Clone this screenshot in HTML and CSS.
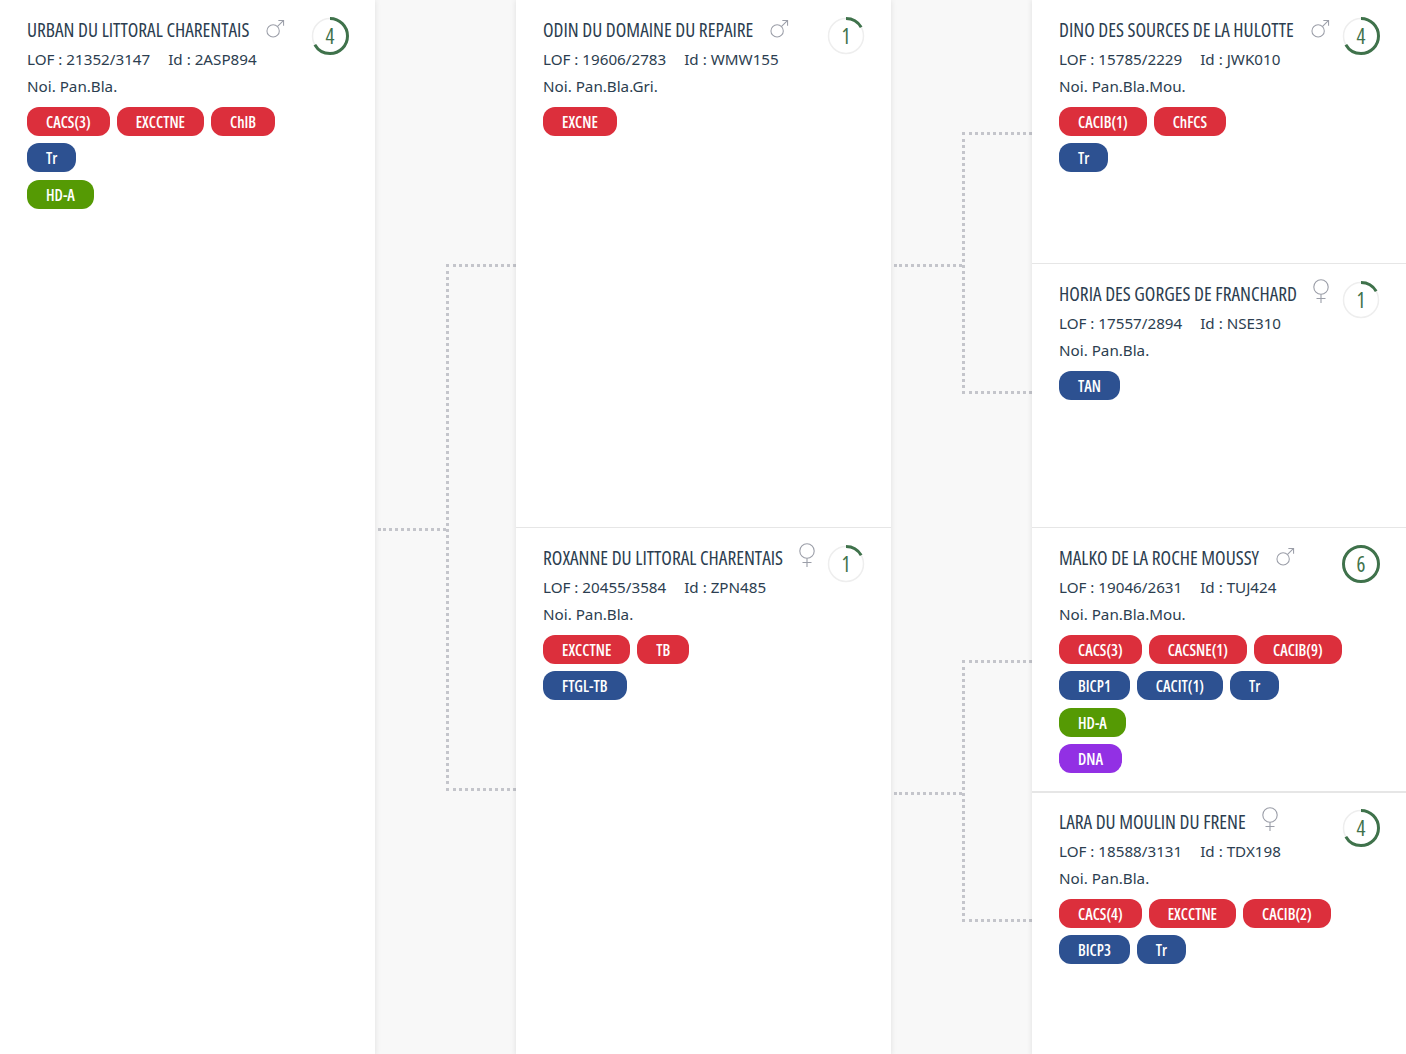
FILE: index.html
```html
<!DOCTYPE html>
<html lang="fr">
<head><meta charset="utf-8"><title>Pedigree</title><link rel="stylesheet" href="styles.css"></head>
<body>
<svg class="defs" width="0" height="0" aria-hidden="true">
  <symbol id="male" viewBox="0 0 20 20"><circle cx="7.5" cy="12.5" r="6.5"/><path d="M12.2 7.8 18.5 1.5M13 1.5h5.5V7"/></symbol>
  <symbol id="female" viewBox="0 0 20 24"><circle cx="10" cy="8" r="7.2"/><path d="M10 15.2V24M5.5 19.5h9"/></symbol>
</svg>
<main class="tree">
  <section class="col">
    <article class="card card-full">
      <div class="info">
        <h2 class="title"><span class="name">URBAN DU LITTORAL CHARENTAIS</span><svg class="sex male"><use href="#male"/></svg></h2>
        <p class="line">LOF : 21352/3147<span class="id">Id : 2ASP894</span></p>
        <p class="line">Noi. Pan.Bla.</p>
        <div class="tags"><span class="tag red">CACS(3)</span><span class="tag red">EXCCTNE</span><span class="tag red">ChIB</span></div>
        <div class="tags"><span class="tag blue">Tr</span></div>
        <div class="tags"><span class="tag green">HD-A</span></div>
      </div>
      <div class="ring"><svg viewBox="0 0 38 38"><circle class="track" cx="19" cy="19" r="17.5"/><circle class="arc" cx="19" cy="19" r="17.5" pathLength="6" stroke-dasharray="4 6"/></svg><span>4</span></div>
    </article>
  </section>
  <div class="link">
    <div class="stub stub-big"></div>
    <div class="fork fork-big"></div>
  </div>
  <section class="col">
    <article class="card card-half">
      <div class="info">
        <h2 class="title"><span class="name">ODIN DU DOMAINE DU REPAIRE</span><svg class="sex male"><use href="#male"/></svg></h2>
        <p class="line">LOF : 19606/2783<span class="id">Id : WMW155</span></p>
        <p class="line">Noi. Pan.Bla.Gri.</p>
        <div class="tags"><span class="tag red">EXCNE</span></div>
      </div>
      <div class="ring"><svg viewBox="0 0 38 38"><circle class="track" cx="19" cy="19" r="17.5"/><circle class="arc" cx="19" cy="19" r="17.5" pathLength="6" stroke-dasharray="1 6"/></svg><span>1</span></div>
    </article>
    <article class="card card-half">
      <div class="info">
        <h2 class="title"><span class="name">ROXANNE DU LITTORAL CHARENTAIS</span><svg class="sex female"><use href="#female"/></svg></h2>
        <p class="line">LOF : 20455/3584<span class="id">Id : ZPN485</span></p>
        <p class="line">Noi. Pan.Bla.</p>
        <div class="tags"><span class="tag red">EXCCTNE</span><span class="tag red">TB</span></div>
        <div class="tags"><span class="tag blue">FTGL-TB</span></div>
      </div>
      <div class="ring"><svg viewBox="0 0 38 38"><circle class="track" cx="19" cy="19" r="17.5"/><circle class="arc" cx="19" cy="19" r="17.5" pathLength="6" stroke-dasharray="1 6"/></svg><span>1</span></div>
    </article>
  </section>
  <div class="link link-double">
    <div class="pair">
      <div class="stub"></div>
      <div class="fork"></div>
    </div>
    <div class="pair">
      <div class="stub"></div>
      <div class="fork"></div>
    </div>
  </div>
  <section class="col col-last">
    <article class="card card-quarter">
      <div class="info">
        <h2 class="title"><span class="name">DINO DES SOURCES DE LA HULOTTE</span><svg class="sex male"><use href="#male"/></svg></h2>
        <p class="line">LOF : 15785/2229<span class="id">Id : JWK010</span></p>
        <p class="line">Noi. Pan.Bla.Mou.</p>
        <div class="tags"><span class="tag red">CACIB(1)</span><span class="tag red">ChFCS</span></div>
        <div class="tags"><span class="tag blue">Tr</span></div>
      </div>
      <div class="ring"><svg viewBox="0 0 38 38"><circle class="track" cx="19" cy="19" r="17.5"/><circle class="arc" cx="19" cy="19" r="17.5" pathLength="6" stroke-dasharray="4 6"/></svg><span>4</span></div>
    </article>
    <article class="card card-quarter">
      <div class="info">
        <h2 class="title"><span class="name">HORIA DES GORGES DE FRANCHARD</span><svg class="sex female"><use href="#female"/></svg></h2>
        <p class="line">LOF : 17557/2894<span class="id">Id : NSE310</span></p>
        <p class="line">Noi. Pan.Bla.</p>
        <div class="tags"><span class="tag blue">TAN</span></div>
      </div>
      <div class="ring"><svg viewBox="0 0 38 38"><circle class="track" cx="19" cy="19" r="17.5"/><circle class="arc" cx="19" cy="19" r="17.5" pathLength="6" stroke-dasharray="1 6"/></svg><span>1</span></div>
    </article>
    <article class="card card-quarter">
      <div class="info">
        <h2 class="title"><span class="name">MALKO DE LA ROCHE MOUSSY</span><svg class="sex male"><use href="#male"/></svg></h2>
        <p class="line">LOF : 19046/2631<span class="id">Id : TUJ424</span></p>
        <p class="line">Noi. Pan.Bla.Mou.</p>
        <div class="tags"><span class="tag red">CACS(3)</span><span class="tag red">CACSNE(1)</span><span class="tag red">CACIB(9)</span></div>
        <div class="tags"><span class="tag blue">BICP1</span><span class="tag blue">CACIT(1)</span><span class="tag blue">Tr</span></div>
        <div class="tags"><span class="tag green">HD-A</span></div>
        <div class="tags"><span class="tag purple">DNA</span></div>
      </div>
      <div class="ring"><svg viewBox="0 0 38 38"><circle class="track" cx="19" cy="19" r="17.5"/><circle class="arc" cx="19" cy="19" r="17.5" pathLength="6" stroke-dasharray="6 6"/></svg><span>6</span></div>
    </article>
    <article class="card card-quarter card-thick">
      <div class="info">
        <h2 class="title"><span class="name">LARA DU MOULIN DU FRENE</span><svg class="sex female"><use href="#female"/></svg></h2>
        <p class="line">LOF : 18588/3131<span class="id">Id : TDX198</span></p>
        <p class="line">Noi. Pan.Bla.</p>
        <div class="tags"><span class="tag red">CACS(4)</span><span class="tag red">EXCCTNE</span><span class="tag red">CACIB(2)</span></div>
        <div class="tags"><span class="tag blue">BICP3</span><span class="tag blue">Tr</span></div>
      </div>
      <div class="ring"><svg viewBox="0 0 38 38"><circle class="track" cx="19" cy="19" r="17.5"/><circle class="arc" cx="19" cy="19" r="17.5" pathLength="6" stroke-dasharray="4 6"/></svg><span>4</span></div>
    </article>
  </section>
</main>
</body>
</html>
```
FILE: styles.css
```css
* { box-sizing: border-box; }
html, body { margin: 0; padding: 0; height: 1054px; overflow: hidden; background: #f8f8f8; }
body { font-family: "Noto Sans", sans-serif; color: #2c3e50; }
.defs { position: absolute; }
.tree { display: grid; grid-template-columns: 375px 141px 375px 141px 374px; height: 1056px; }
.col { background: #fff; display: flex; flex-direction: column; box-shadow: 0 0 6px rgba(0,0,0,.1); position: relative; }
.col-last { box-shadow: -1px 0 5px rgba(0,0,0,.08); }
.card { display: flex; justify-content: space-between; padding: 16px 26px 0 27px; border-bottom: 1px solid #e6e6e6; background: #fff; }
.card-full { height: 1056px; border-bottom: 0; }
.card-half { height: 528px; }
.card-quarter { height: 264px; }
.card:last-child { border-bottom: 0; }
.card-thick { border-top: 1px solid #e6e6e6; padding-top: 15px; }
.info { flex: 1; min-width: 0; }
.title { margin: 0; height: 30px; display: flex; align-items: flex-start; font-family: "Open Sans", sans-serif; font-stretch: 75%; font-size: 19.4px; line-height: 28px; font-weight: 500; color: #2c3e50; white-space: nowrap; }
.sex { fill: none; stroke: #9b9ea8; stroke-width: 1.1; flex: none; }
.sex.male { width: 19px; height: 19px; margin: 3px 0 0 17px; }
.sex.female { width: 20px; height: 24px; margin: -1px 0 0 14px; }
.line { margin: 0; font-size: 15.2px; line-height: 27px; white-space: nowrap; }
.id { margin-left: 18px; }
.tags { display: flex; gap: 7px; margin-bottom: 7.4px; }
.line + .tags { margin-top: 7px; }
.tag { height: 29px; padding: 0 19px; border-radius: 12px; color: #fff; font-family: "Open Sans", sans-serif; font-stretch: 75%; font-size: 15.5px; font-weight: 600; line-height: 30px; white-space: nowrap; }
.red { background: #dc2f3c; }
.blue { background: #2d5191; }
.green { background: #559a04; }
.purple { background: #9230e4; }
.ring { position: relative; width: 38px; height: 38px; margin-top: 1px; flex: none; }
.ring svg { display: block; width: 38px; height: 38px; fill: none; transform: rotate(-90deg); }
.track { stroke: #eeeeee; stroke-width: 1.5; }
.arc { stroke: #3f724b; stroke-width: 3; }
.ring span { position: absolute; left: 0; right: 0; top: 0; line-height: 38px; text-align: center; font-family: "Open Sans", sans-serif; font-stretch: 75%; font-size: 21px; font-weight: 500; color: #3f724b; }
.link { display: flex; height: 1056px; padding-left: 3px; align-items: flex-start; }
.link-double { flex-direction: column; padding-left: 0; }
.pair { display: flex; width: 100%; height: 528px; padding-left: 3px; align-items: flex-start; }
.stub { width: 68px; flex: none; height: 3px; border-top: 3px dotted #c4c5cb; margin-top: 264px; }
.stub-big { margin-top: 528px; }
.fork { flex: 1; height: 262px; margin-top: 132px; border: 3px dotted #c4c5cb; border-right: 0; }
.fork-big { height: 527px; margin-top: 264px; }
```
